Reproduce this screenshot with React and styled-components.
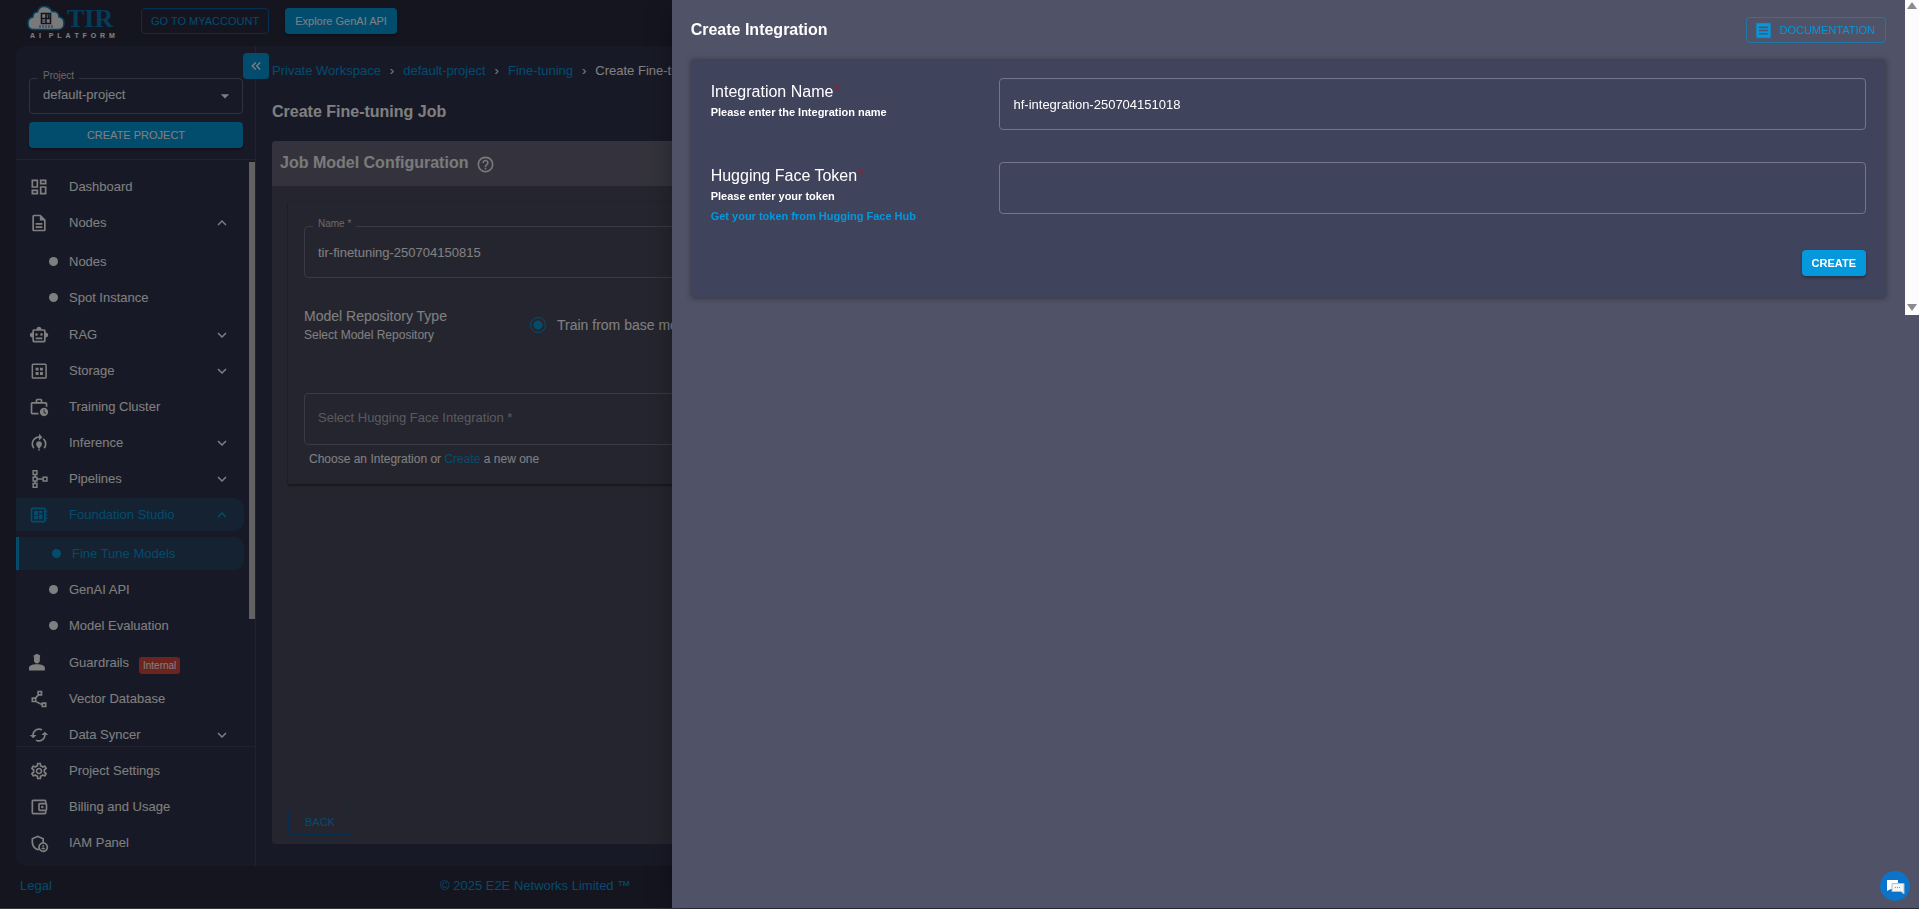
import React from "react";
import styled, { createGlobalStyle, css } from "styled-components";
import {
  MdOutlineDashboard,
  MdOutlineDescription,
  MdOutlineSmartToy,
  MdOutlineWorkHistory,
  MdModelTraining,
  MdOutlineDeveloperBoard,
  MdOutlinePolyline,
  MdCached,
  MdOutlineSettings,
  MdOutlineAccountBalanceWallet,
  MdOutlineAdminPanelSettings,
  MdKeyboardArrowDown,
  MdKeyboardArrowUp,
  MdKeyboardDoubleArrowLeft,
  MdArrowDropDown,
  MdHelpOutline,
  MdReceipt,
} from "react-icons/md";

const c = {
  page: "#2a2a40",
  panel: "#30334c",
  card: "#4b4b5f",
  cardHead: "#68677a",
  blue: "#0598dc",
  blueLine: "#0b5fa8",
  text: "#ffffff",
  drawer: "#505268",
  drawerCard: "#40435c",
};

const GlobalStyle = createGlobalStyle`
  * { box-sizing: border-box; }
  body {
    margin: 0;
    overflow: hidden;
    background: #6c6c80;
    color: ${c.text};
    font-family: "Liberation Sans", Arial, sans-serif;
    font-size: 13px;
    line-height: 16px;
  }
  a { color: ${c.blue}; text-decoration: none; }
  button, input, select { font-family: inherit; color: inherit; }
  ul { list-style: none; margin: 0; padding: 0; }
`;

const Page = styled.div`
  display: flex;
  flex-direction: column;
  height: calc(100vh - 1px);
  background: ${c.page};
`;

const Header = styled.header`
  display: flex;
  align-items: flex-start;
  height: 46px;
  padding: 4px 0 0 27px;
`;

const Logo = styled.div`
  width: 88px;
  margin-right: 26px;
`;

const LogoTop = styled.div`
  display: flex;
  align-items: center;
  gap: 2px;
  height: 27px;
`;

const Wordmark = styled.span`
  padding-top: 2px;
  font: bold 26px/26px "Liberation Serif", serif;
  color: #0a78b4;
`;

const Tagline = styled.div`
  display: flex;
  justify-content: space-between;
  padding: 0 0 0 3px;
  font-size: 7px;
  line-height: 10px;
  font-weight: bold;
`;

const Button = styled.button`
  display: inline-flex;
  align-items: center;
  justify-content: center;
  height: 26px;
  padding: 0 ${(p) => p.$pad || 10}px;
  border: 0;
  border-radius: 4px;
  background: ${c.blue};
  color: #fff;
  font-size: 11px;
  font-weight: ${(p) => (p.$bold ? 700 : 400)};
  white-space: nowrap;
  box-shadow: 0 2px 3px rgba(0, 0, 0, 0.3);
  ${(p) =>
    p.$outlined &&
    css`
      background: transparent;
      border: 1px solid ${p.$line || c.blueLine};
      color: ${c.blue};
      box-shadow: none;
    `}
`;

const HeaderActions = styled.div`
  display: flex;
  gap: 16px;
  padding-top: 4px;
`;

const Shell = styled.div`
  display: flex;
  flex: 1;
  min-height: 0;
  margin-left: 16px;
  background: ${c.panel};
  border-radius: 10px 0 0 10px;
`;

const Sidebar = styled.aside`
  position: relative;
  display: flex;
  flex-direction: column;
  width: 240px;
  border-right: 1px solid #42445c;
`;

const Collapse = styled.button`
  position: absolute;
  top: 7px;
  right: -14px;
  display: flex;
  align-items: center;
  justify-content: center;
  width: 26px;
  height: 26px;
  padding: 0;
  border: 0;
  border-radius: 4px;
  background: ${c.blue};
  font-size: 16px;
`;

const ProjectArea = styled.div`
  display: flex;
  flex-direction: column;
  gap: 8px;
  padding: 32px 12px 11px 13px;
  border-bottom: 1px solid #42445c;
`;

const Field = styled.div`
  position: relative;
  display: flex;
  align-items: center;
`;

const FloatLabel = styled.label`
  position: absolute;
  top: -10px;
  left: 9px;
  padding: 0 5px;
  background: ${(p) => p.$bg};
  color: #d0d0d8;
  font-size: 10px;
`;

const fieldBox = css`
  width: 100%;
  height: ${(p) => p.$height || 52}px;
  padding: 0 13px;
  border: 1px solid ${(p) => p.$line || "#74748a"};
  border-radius: 4px;
  background: transparent;
  font-size: 13px;
  outline: none;
`;

const Input = styled.input`
  ${fieldBox}
`;

const Select = styled.select`
  ${fieldBox}
  padding-bottom: 3px;
  appearance: none;
  color: ${(p) => p.$color || "#fff"};
`;

const SelectArrow = styled(MdArrowDropDown)`
  position: absolute;
  right: 8px;
  font-size: 20px;
  pointer-events: none;
`;

const NavScroll = styled.nav`
  position: relative;
  flex: 1;
  min-height: 0;
  overflow: hidden;
  padding: 10px 11px 0 0;
`;

const Thumb = styled.div`
  position: absolute;
  top: 2px;
  right: 0;
  width: 6px;
  height: 78%;
  background: #c4c4c4;
`;

const NavFoot = styled.nav`
  padding: 7px 11px 4px 0;
  border-top: 1px solid #42445c;
`;

const NavLink = styled.a`
  display: flex;
  align-items: center;
  height: 33px;
  margin-bottom: 3px;
  padding-left: ${(p) => (p.$sub ? 33 : 13)}px;
  padding-right: 13px;
  border-radius: 0 10px 10px 0;
  color: ${(p) => (p.$active ? c.blue : c.text)};
  background: ${(p) => (p.$active ? "#2a4462" : "transparent")};
  ${(p) =>
    p.$current &&
    css`
      border-left: 3px solid ${c.blue};
    `}
  > svg:first-child {
    width: 20px;
    height: 20px;
    margin-right: 20px;
    flex: none;
  }
`;

const NavText = styled.span`
  display: flex;
  align-items: center;
  flex: 1;
`;

const Dot = styled.i`
  width: 9px;
  height: 9px;
  margin: 0 11px 0 0;
  border-radius: 50%;
  background: currentColor;
`;

const SubList = styled.ul`
  padding: 3px 0 1px;
`;

const Badge = styled.span`
  margin: 6px 0 0 10px;
  padding: 0 4px;
  border-radius: 3px;
  background: #d8483c;
  color: #fff;
  font-size: 10px;
  line-height: 17px;
`;

const Main = styled.main`
  display: flex;
  flex-direction: column;
  flex: 1;
  padding: 17px 16px 22px;
`;

const Crumbs = styled.ol`
  display: flex;
  gap: 9px;
  margin: 0 0 23px;
  padding: 0;
  list-style: none;
`;

const PageTitle = styled.h1`
  margin: 0;
  font-size: 16px;
  line-height: 20px;
`;

const JobCard = styled.section`
  display: flex;
  flex-direction: column;
  flex: 1;
  margin-top: 19px;
  border-radius: 4px;
  background: ${c.card};
  overflow: hidden;
`;

const JobHead = styled.h2`
  display: flex;
  align-items: center;
  gap: 8px;
  height: 45px;
  margin: 0;
  padding: 0 8px 1px;
  background: ${c.cardHead};
  font-size: 16px;
  color: #f4f4f4;
  svg {
    font-size: 19px;
    margin-top: 2px;
  }
`;

const JobForm = styled.div`
  margin: 16px 16px 0;
  padding: 24px 16px 16px;
  box-shadow: 0 2px 2px rgba(0, 0, 0, 0.35), 0 0 1px rgba(0, 0, 0, 0.5);
`;

const RepoRow = styled.div`
  display: grid;
  grid-template-columns: 226px 1fr;
  align-items: center;
  padding: 28px 0 49px;
`;

const RepoTitle = styled.div`
  font-size: 14px;
  line-height: 20px;
`;

const Small = styled.div`
  font-size: 12px;
  line-height: 18px;
`;

const Hint = styled(Small)`
  padding: 5px 5px 0;
`;

const RadioLabel = styled.label`
  display: flex;
  align-items: center;
  gap: 11px;
  font-size: 14px;
`;

const Radio = styled.input`
  appearance: none;
  width: 16px;
  height: 16px;
  margin: 0;
  border: 1px solid ${c.blue};
  border-radius: 50%;
  background: radial-gradient(circle, ${c.blue} 4px, transparent 5px);
`;

const JobFoot = styled.div`
  margin-top: auto;
  padding: 0 16px 9px;
`;

const Footer = styled.footer`
  display: grid;
  grid-template-columns: 420px auto;
  align-items: center;
  height: 42px;
  padding: 0 20px 3px;
`;

const Backdrop = styled.div`
  position: fixed;
  inset: 0;
  background: rgba(0, 0, 0, 0.5);
`;

const Drawer = styled.div`
  position: fixed;
  top: 0;
  right: 0;
  bottom: 1px;
  display: flex;
  align-items: flex-start;
  width: 65%;
  background: ${c.drawer};
  box-shadow: 0 8px 10px -5px rgba(0, 0, 0, 0.2),
    0 16px 24px 2px rgba(0, 0, 0, 0.14), 0 6px 30px 5px rgba(0, 0, 0, 0.12);
`;

const DrawerBody = styled.div`
  flex: 1;
  padding: 17px 19px;
`;

const DrawerHead = styled.div`
  display: flex;
  align-items: center;
  justify-content: space-between;
  margin-bottom: 16px;
`;

const DocIcon = styled(MdReceipt)`
  width: 19px;
  height: 19px;
  margin: 0 6px 0 -3px;
`;

const DrawerTitle = styled.h2`
  margin: 0;
  font-size: 16px;
  line-height: 20px;
`;

const DrawerCard = styled.form`
  padding: 19px 20px 21px;
  border-radius: 4px;
  background: ${c.drawerCard};
  box-shadow: 0 2px 4px rgba(60, 60, 66, 0.9), 0 0 5px rgba(64, 64, 76, 0.6);
`;

const FormRow = styled.div`
  display: grid;
  grid-template-columns: 25% 75%;
  align-items: start;
  min-height: ${(p) => p.$min || 84}px;
`;

const FormLabel = styled.label`
  display: block;
  padding-top: 4px;
  font-size: 16px;
  line-height: 20px;
`;

const Req = styled.span`
  color: #92222c;
`;

const Help = styled.div`
  font-size: 11px;
  font-weight: bold;
  line-height: 20px;
`;

const FormActions = styled.div`
  display: flex;
  justify-content: flex-end;
`;

const Track = styled.div`
  display: flex;
  flex-direction: column;
  align-items: center;
  justify-content: space-between;
  width: 14px;
  height: 315px;
  padding: 2px 0 4px;
  background: #fcfcfc;
`;

const Chat = styled.button`
  position: fixed;
  right: 9px;
  bottom: 8px;
  width: 30px;
  height: 30px;
  padding: 0;
  border: 0;
  border-radius: 50%;
  background: #0b74c8;
`;

function Cloud() {
  return (
    <svg width="38" height="26" viewBox="0 0 38 26">
      <path
        d="M7 24.500C3 24.500 1 22 1 18.500c0-3.500 2-6 5-6.500C6 8.500 8 7 10.500 7 11.500 3.500 13.500 1.500 17 1.500s6.500 2 8 5c4.500-.5 7 2 7 5.500 3.500.5 5 3 5 6.500s-2.500 6-6 6z"
        fill="#f2f2f2"
        stroke="#0a84bd"
        strokeWidth="1.500"
      />
      <path d="M14.500 8.500h9v10h-9zM19 8v10.500M14.500 13.500H24M21.500 9v4" fill="none" stroke="#2a2a40" strokeWidth="1.600" />
      <path d="M19.500 10h4M15 16h4" stroke="#0a84bd" strokeWidth="1" />
      <path d="M12 21.500h14" stroke="#8a98c4" strokeWidth="2.500" strokeDasharray="2 1" />
    </svg>
  );
}

function StorageIcon() {
  return (
    <svg viewBox="0 0 24 24" fill="none">
      <rect x="4" y="4" width="16.500" height="16.500" rx="1" stroke="currentColor" strokeWidth="1.800" />
      <path d="M8 8h3.500v3.500H8zM13.200 8h3.500v3.500h-3.500zM8 13.200h3.500v3.500H8zM13.200 13.200h3.500v3.500h-3.500z" fill="currentColor" />
    </svg>
  );
}

function PipelineIcon() {
  return (
    <svg viewBox="0 0 24 24" fill="none" stroke="currentColor" strokeWidth="1.800">
      <path d="M5 2h4.500v4.500H5zM5 9.800h4.500v4.500H5zM5 17.500h4.500V22H5zM17 9.800h4.500v4.500H17zM7.250 6.500v3.300M7.250 14.300v3.200M9.500 12H17" />
    </svg>
  );
}

function GuardIcon() {
  return (
    <svg viewBox="0 0 24 24" fill="currentColor">
      <path d="M5.500 3 9.500 1l4 2-.5 3v3c0 2-1.500 3.500-3.500 3.500S6 11 6 9V6zM0 21v-3.500c0-2 4-4 9.500-4s9.500 2 9.500 4V21z" />
    </svg>
  );
}

function Chats() {
  return (
    <svg width="30" height="30" viewBox="0 0 30 30">
      <path d="M7 9h11v9h-7l-4 2z" fill="#fff" />
      <path d="M12 12.500h12V23l-3-2.500h-9z" fill="#f4f4f4" stroke="#a8bfd4" strokeWidth="1" />
      <path d="M15 16.500h6" stroke="#8899ab" strokeWidth="1" strokeDasharray="1 1" />
    </svg>
  );
}

const navItems = [
  { text: "Dashboard", icon: MdOutlineDashboard },
  { text: "Nodes", icon: MdOutlineDescription, open: true, sub: ["Nodes", "Spot Instance"] },
  { text: "RAG", icon: MdOutlineSmartToy, sub: [] },
  { text: "Storage", icon: StorageIcon, sub: [] },
  { text: "Training Cluster", icon: MdOutlineWorkHistory },
  { text: "Inference", icon: MdModelTraining, sub: [] },
  { text: "Pipelines", icon: PipelineIcon, sub: [] },
  {
    text: "Foundation Studio",
    icon: MdOutlineDeveloperBoard,
    active: true,
    open: true,
    sub: ["Fine Tune Models", "GenAI API", "Model Evaluation"],
  },
  { text: "Guardrails", icon: GuardIcon, badge: "Internal" },
  { text: "Vector Database", icon: MdOutlinePolyline },
  { text: "Data Syncer", icon: MdCached, sub: [] },
];

const footItems = [
  { text: "Project Settings", icon: MdOutlineSettings },
  { text: "Billing and Usage", icon: MdOutlineAccountBalanceWallet },
  { text: "IAM Panel", icon: MdOutlineAdminPanelSettings },
];

function NavItem({ item }) {
  const Icon = item.icon;
  return (
    <li>
      <NavLink href="#" $active={item.active}>
        <Icon />
        <NavText>
          {item.text}
          {item.badge && <Badge>{item.badge}</Badge>}
        </NavText>
        {item.sub && (item.open ? <MdKeyboardArrowUp size={18} /> : <MdKeyboardArrowDown size={18} />)}
      </NavLink>
      {item.open && (
        <SubList>
          {item.sub.map((name) => {
            const current = name === "Fine Tune Models";
            return (
              <li key={name}>
                <NavLink href="#" $sub $active={current} $current={current}>
                  <Dot />
                  <NavText>{name}</NavText>
                </NavLink>
              </li>
            );
          })}
        </SubList>
      )}
    </li>
  );
}

export default function App() {
  return (
    <>
      <GlobalStyle />
      <Page>
        <Header>
          <Logo>
            <LogoTop>
              <Cloud />
              <Wordmark>TIR</Wordmark>
            </LogoTop>
            <Tagline>
              {"AI PLATFORM".split("").map((ch, i) => (
                <span key={i}>{ch}</span>
              ))}
            </Tagline>
          </Logo>
          <HeaderActions>
            <Button $outlined $pad={9}>GO TO MYACCOUNT</Button>
            <Button>Explore GenAI API</Button>
          </HeaderActions>
        </Header>

        <Shell>
          <Sidebar>
            <ProjectArea>
              <Field>
                <FloatLabel htmlFor="project" $bg={c.panel}>Project</FloatLabel>
                <Select id="project" $height={36} $line="#62647c">
                  <option>default-project</option>
                </Select>
                <SelectArrow />
              </Field>
              <Button>CREATE PROJECT</Button>
            </ProjectArea>
            <NavScroll>
              <ul>
                {navItems.map((item) => (
                  <NavItem key={item.text} item={item} />
                ))}
              </ul>
              <Thumb />
            </NavScroll>
            <NavFoot>
              <ul>
                {footItems.map((item) => (
                  <NavItem key={item.text} item={item} />
                ))}
              </ul>
            </NavFoot>
            <Collapse aria-label="Collapse sidebar">
              <MdKeyboardDoubleArrowLeft />
            </Collapse>
          </Sidebar>

          <Main>
            <Crumbs>
              <li><a href="#">Private Workspace</a></li>
              <li>›</li>
              <li><a href="#">default-project</a></li>
              <li>›</li>
              <li><a href="#">Fine-tuning</a></li>
              <li>›</li>
              <li>Create Fine-tuning Job</li>
            </Crumbs>
            <PageTitle>Create Fine-tuning Job</PageTitle>
            <JobCard>
              <JobHead>
                Job Model Configuration <MdHelpOutline />
              </JobHead>
              <JobForm>
                <Field>
                  <FloatLabel htmlFor="job-name" $bg={c.card}>Name *</FloatLabel>
                  <Input id="job-name" defaultValue="tir-finetuning-250704150815" />
                </Field>
                <RepoRow>
                  <div>
                    <RepoTitle>Model Repository Type</RepoTitle>
                    <Small>Select Model Repository</Small>
                  </div>
                  <RadioLabel>
                    <Radio type="radio" name="repo" defaultChecked />
                    Train from base model
                  </RadioLabel>
                </RepoRow>
                <Field>
                  <Select aria-label="Select Hugging Face Integration" $color="#b4b4bc">
                    <option>Select Hugging Face Integration *</option>
                  </Select>
                </Field>
                <Hint>
                  Choose an Integration or <a href="#">Create</a> a new one
                </Hint>
              </JobForm>
              <JobFoot>
                <Button $outlined $pad={16}>BACK</Button>
              </JobFoot>
            </JobCard>
          </Main>
        </Shell>

        <Footer>
          <a href="#">Legal</a>
          <a href="#">© 2025 E2E Networks Limited ™</a>
        </Footer>
      </Page>

      <Backdrop />
      <Drawer role="dialog" aria-labelledby="drawer-title">
        <DrawerBody>
          <DrawerHead>
            <DrawerTitle id="drawer-title">Create Integration</DrawerTitle>
            <Button $outlined $line="#2277a8">
              <DocIcon />
              DOCUMENTATION
            </Button>
          </DrawerHead>
          <DrawerCard onSubmit={(e) => e.preventDefault()}>
            <FormRow>
              <div>
                <FormLabel htmlFor="integration-name">
                  Integration Name<Req>*</Req>
                </FormLabel>
                <Help>Please enter the Integration name</Help>
              </div>
              <Input id="integration-name" defaultValue="hf-integration-250704151018" />
            </FormRow>
            <FormRow $min={88}>
              <div>
                <FormLabel htmlFor="hf-token">
                  Hugging Face Token<Req>*</Req>
                </FormLabel>
                <Help>Please enter your token</Help>
                <Help><a href="#">Get your token from Hugging Face Hub</a></Help>
              </div>
              <Input id="hf-token" />
            </FormRow>
            <FormActions>
              <Button $bold type="submit">CREATE</Button>
            </FormActions>
          </DrawerCard>
        </DrawerBody>
        <Track>
          <svg width="10" height="8"><path d="M5 0l5 7H0z" fill="#8a8a90" /></svg>
          <svg width="10" height="7"><path d="M5 7L0 0h10z" fill="#8a8a90" /></svg>
        </Track>
      </Drawer>
      <Chat aria-label="Open chat">
        <Chats />
      </Chat>
    </>
  );
}
